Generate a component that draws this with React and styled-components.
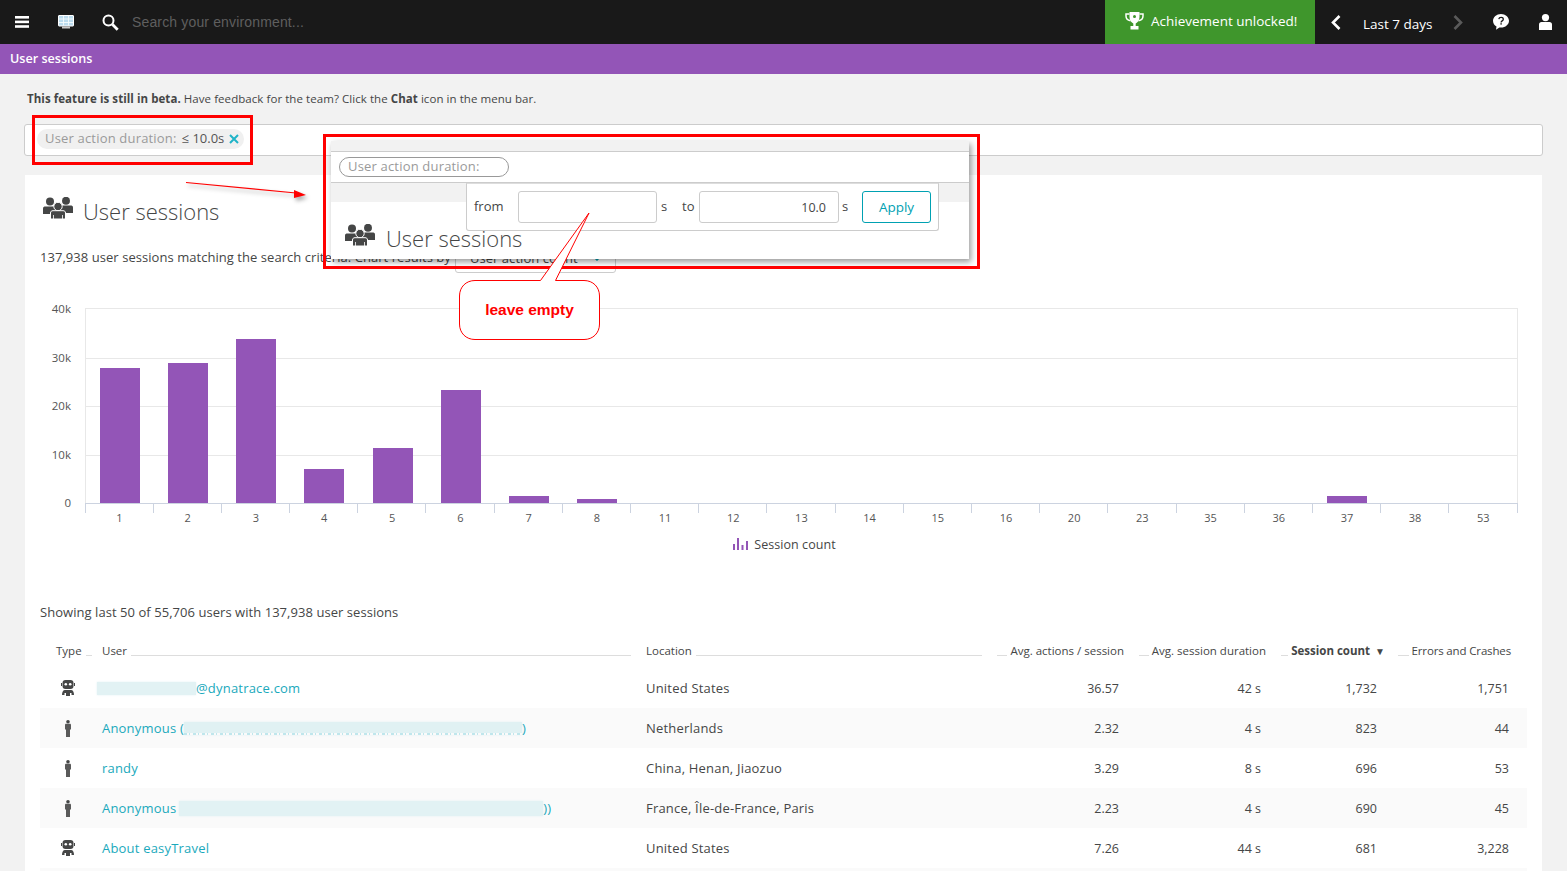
import React from "react";
import styled, { createGlobalStyle } from "styled-components";

const Global = createGlobalStyle`
  html, body { margin: 0; padding: 0; background: #f2f2f2; }
  body { font-family: "Open Sans", "Noto Sans", sans-serif; color: #454646; }
  * { box-sizing: border-box; }
`;

const Page = styled.div`
  position: relative;
  width: 1567px;
  height: 871px;
  overflow: hidden;
  background: #f2f2f2;
`;

/* ---------- top bars ---------- */
const TopBar = styled.header`
  display: flex;
  align-items: center;
  height: 44px;
  padding-right: 15px;
  background: #191919;
  color: #fff;
`;
const IconSlot = styled.span`
  display: flex;
  align-items: center;
  justify-content: center;
  flex: none;
  width: ${(p) => p.$w}px;
  margin-left: ${(p) => p.$ml || 0}px;
`;
const SearchText = styled.span`
  flex: 1;
  margin-left: 13px;
  font: 14px "Liberation Sans", Arial, sans-serif;
  color: #5f5f5f;
  letter-spacing: 0.15px;
`;
const Achievement = styled.div`
  display: flex;
  align-items: center;
  flex: none;
  gap: 7px;
  width: 210px;
  height: 44px;
  padding: 0 0 2px 20px;
  background: #3f962c;
  font-size: 13.5px;
  white-space: nowrap;
`;
const Timeframe = styled.span`
  flex: none;
  margin: 4px 0 0 22px;
  width: 70px;
  font-size: 13.5px;
  white-space: nowrap;
`;
const TitleBar = styled.div`
  display: flex;
  align-items: center;
  height: 30px;
  padding: 0 0 2px 10px;
  background: #9355b7;
  color: #fff;
  font-size: 12.6px;
  font-weight: 600;
`;

/* ---------- beta notice and filter ---------- */
const Notice = styled.p`
  margin: 0;
  padding: 17px 0 0 27px;
  height: 50px;
  font-size: 11.5px;
  letter-spacing: 0.06px;
  line-height: 16px;
  color: #454646;
`;
const FilterBar = styled.div`
  display: flex;
  align-items: center;
  height: 32px;
  margin: 0 24px;
  padding: 0 0 2px 12px;
  background: #fff;
  border: 1px solid #ccc;
  border-radius: 3px;
`;
const FilterPill = styled.span`
  display: inline-flex;
  align-items: center;
  width: 207px;
  height: 20px;
  padding: 0 5px 3px 8px;
  border-radius: 10px;
  background: #f0f0f0;
  font-size: 13px;
  letter-spacing: 0.18px;
  color: #9a9a9a;
  white-space: nowrap;
`;
const PillValue = styled.span`
  margin-left: 5px;
  color: #555;
  letter-spacing: 0;
`;
const PillClose = styled.span`
  display: flex;
  margin: 3px 0 0 5px;
`;

/* ---------- card ---------- */
const Card = styled.main`
  margin: 19px 25px 0;
  padding: 0 15px;
  background: #fff;
  height: 700px;
`;
const TitleRow = styled.div`
  display: flex;
  align-items: center;
  gap: 10px;
  height: 30px;
  margin-left: 3px;
  position: relative;
  top: 21px;
`;
const TitleIcon = styled.span`
  display: flex;
  margin-bottom: 6px;
`;
const PageTitle = styled.h1`
  margin: 0;
  font-size: 22px;
  font-weight: 300;
  color: #454646;
  white-space: nowrap;
`;
const ResultRow = styled.div`
  display: flex;
  align-items: center;
  height: 30px;
  margin-top: 38px;
  padding-bottom: 2px;
  font-size: 13px;
  letter-spacing: 0.05px;
  white-space: nowrap;
`;
const ChartSelect = styled.div`
  display: flex;
  align-items: center;
  justify-content: space-between;
  flex: none;
  width: 161px;
  height: 30px;
  margin: 2px 0 0 4px;
  padding: 0 14px;
  border: 1px solid #ccc;
  border-radius: 3px;
`;
const ChartSvg = styled.svg`
  display: block;
  margin-top: 22px;
`;
const Legend = styled.div`
  display: flex;
  align-items: center;
  justify-content: center;
  gap: 6px;
  width: 1487px;
  height: 20px;
  margin-top: 9px;
  padding-left: 2px;
  font-size: 12.5px;
  letter-spacing: 0.05px;
`;
const Summary = styled.div`
  height: 20px;
  margin-top: 48px;
  font-size: 13px;
  letter-spacing: 0.05px;
  line-height: 20px;
`;

/* ---------- table ---------- */
const columns = "46px 544px 351px 142px 142px 117px 113px";
const HeaderRow = styled.div`
  display: grid;
  grid-template-columns: ${columns};
  height: 20px;
  margin: 19px 0 7px;
  padding: 0 16px;
  font-size: 11.5px;
  line-height: 20px;
`;
const HeadCell = styled.div`
  display: flex;
  align-items: flex-start;
  padding-right: ${(p) => (p.$narrow ? 10 : p.$last ? 0 : 15)}px;
  white-space: nowrap;
  font-weight: ${(p) => (p.$sorted ? 700 : 400)};
  letter-spacing: ${(p) => (p.$last ? "-0.15px" : "0")};
`;
const HeadLine = styled.span`
  flex: 1;
  height: 15px;
  border-bottom: 1px solid #ddd;
  margin: ${(p) => (p.$before ? "0 3px 0 0" : "0 0 0 4px")};
`;
const SortMark = styled.span`
  margin: 0 -2px 0 5px;
  font-size: 10px;
`;
const Row = styled.div`
  display: grid;
  grid-template-columns: ${columns};
  align-items: center;
  height: 40px;
  padding: 0 16px;
  font-size: 13px;
  letter-spacing: 0.2px;
  background: ${(p) => (p.$alt ? "#fafafa" : "#fff")};
`;
const TypeCell = styled.div`
  display: flex;
  justify-content: center;
  width: 24px;
`;
const UserCell = styled.div`
  display: flex;
  align-items: center;
  color: #1aa9bc;
  white-space: nowrap;
`;
const Redacted = styled.span`
  display: inline-block;
  flex: none;
  width: ${(p) => p.$w}px;
  height: ${(p) => p.$h}px;
  margin-left: ${(p) => p.$ml || 0}px;
  background: ${(p) =>
    p.$trace
      ? `linear-gradient(#e0f1f3, #e0f1f3) top / 100% 11px no-repeat,
         repeating-linear-gradient(90deg, #bfe6ec 0 3px, #fafafa 3px 5px, #bfe6ec 5px 6px, #fafafa 6px 9px)`
      : "#e2f2f4"};
  box-shadow: 0 0 2px #e2f2f4;
`;
const NumCell = styled.div`
  text-align: right;
  padding-right: ${(p) => p.$pr}px;
  font-size: 12.5px;
  letter-spacing: 0;
`;

/* ---------- annotations laid over the page ---------- */
const RedBox = styled.div`
  position: absolute;
  border: 3px solid #f00;
  pointer-events: none;
`;
const FilterMark = styled(RedBox)`
  left: 32px;
  top: 115px;
  width: 221px;
  height: 50px;
`;
const PopupMark = styled(RedBox)`
  left: 323px;
  top: 134px;
  width: 657px;
  height: 135px;
`;
const Popup = styled.div`
  position: absolute;
  left: 331px;
  top: 141px;
  width: 638px;
  height: 118px;
  background: #fff;
  box-shadow: 2px 3px 6px rgba(0, 0, 0, 0.4);
`;
const PopupTop = styled.div`
  height: 11px;
  background: #f2f2f2;
  border-bottom: 1px solid #ccc;
`;
const PopupFilter = styled.div`
  display: flex;
  align-items: center;
  height: 31px;
  padding-left: 8px;
  border-bottom: 1px solid #ccc;
`;
const OutlinePill = styled.span`
  display: flex;
  align-items: center;
  width: 170px;
  height: 20px;
  padding: 0 0 2px 8px;
  border: 1px solid #999;
  border-radius: 10px;
  font-size: 13px;
  letter-spacing: 0.18px;
  color: #9a9a9a;
  white-space: nowrap;
`;
const PopupGap = styled.div`
  height: 19px;
  background: #f2f2f2;
`;
const PopupTitle = styled.div`
  display: flex;
  align-items: center;
  gap: 11px;
  height: 30px;
  margin: 21px 0 0 14px;
`;
const RangeBox = styled.div`
  position: absolute;
  left: 135px;
  top: 42px;
  display: flex;
  align-items: center;
  width: 473px;
  height: 48px;
  padding-left: 7px;
  background: #fff;
  border: 1px solid #ccc;
  border-top-color: #ddd;
  border-radius: 0 0 3px 3px;
  font-size: 13px;
`;
const RangeLabel = styled.span`
  flex: none;
  width: ${(p) => p.$w}px;
  padding: 0 0 2px ${(p) => p.$pl || 0}px;
`;
const RangeInput = styled.div`
  flex: none;
  width: ${(p) => p.$w}px;
  height: 32px;
  padding-right: 12px;
  border: 1px solid #ccc;
  border-radius: 3px;
  text-align: right;
  line-height: 32px;
  font-size: 12.5px;
`;
const ApplyButton = styled.button`
  flex: none;
  width: 69px;
  height: 32px;
  padding: 0;
  background: #fff;
  border: 1px solid #00a1b2;
  border-radius: 3px;
  color: #00a1b2;
  font: inherit;
  font-size: 13.5px;
`;
const Overlay = styled.svg`
  position: absolute;
  left: 0;
  top: 0;
  pointer-events: none;
`;
const ArrowOverlay = styled(Overlay)`
  filter: drop-shadow(2px 3px 2px rgba(0, 0, 0, 0.35));
`;
const CalloutText = styled.span`
  position: absolute;
  left: 459px;
  top: 299px;
  width: 141px;
  text-align: center;
  font: 700 15.5px/22px "Liberation Sans", Arial, sans-serif;
  color: #f00;
`;

/* ---------- drawings ---------- */
const MenuIcon = () => (
  <svg width="14" height="12" viewBox="0 0 14 12" fill="#fff">
    <rect y="0" width="14" height="2.6" />
    <rect y="4.6" width="14" height="2.6" />
    <rect y="9.2" width="14" height="2.6" />
  </svg>
);
const MonitorIcon = () => (
  <svg width="16" height="14" viewBox="0 0 16 14">
    <rect x="0.5" y="0.5" width="15" height="10.500" rx="0.5" fill="#bcdcee" stroke="#fff" />
    <path d="M1 4h14M1 7.500h14M5.500 1v9.500M10.500 1v9.500" stroke="#f4fafd" strokeWidth="0.9" />
    <rect x="4" y="11.500" width="8" height="2" fill="#c8c8c8" />
  </svg>
);
const SearchIcon = () => (
  <svg width="17" height="17" viewBox="0 0 17 17" fill="none" stroke="#fff">
    <circle cx="6.5" cy="6.5" r="5" strokeWidth="2" />
    <path d="M10.5 10.5l5.2 5.2" strokeWidth="2.8" />
  </svg>
);
const TrophyIcon = () => (
  <svg width="19" height="18" viewBox="0 0 19 18" fill="#fff">
    <path d="M4.500 0h10v5c0 3.400-2 5.600-3.800 6.400V14h2.800v3.500h-8V14h2.800v-2.600C6.500 10.600 4.500 8.400 4.500 5z" />
    <path d="M4.500 2H1v2c0 2.500 2 4.300 4.500 4.800M14.500 2H18v2c0 2.500-2 4.300-4.500 4.800" fill="none" stroke="#fff" strokeWidth="1.5" />
    <circle cx="9.500" cy="4.500" r="1.500" fill="#3f962c" />
  </svg>
);
const Chevron = ({ left, color }) => (
  <svg width="10" height="15" viewBox="0 0 10 15" fill="none" stroke={color} strokeWidth="2.6">
    <path d={left ? "M8.500 1L2 7.500l6.500 6.500" : "M1.500 1L8 7.500 1.500 14"} />
  </svg>
);
const ChatIcon = () => (
  <svg width="16" height="16" viewBox="0 0 16 16">
    <path d="M8 0c4.400 0 8 3 8 6.800s-3.600 6.800-8 6.800c-.6 0-1.100 0-1.600-.1L3 15.800l.5-3.200C1.400 11.400 0 9.300 0 6.800 0 3 3.600 0 8 0z" fill="#fff" />
    <path d="M5.800 5.200c.2-1.200 1.100-1.800 2.300-1.800 1.300 0 2.200.7 2.200 1.800 0 1.700-2.200 1.600-2.200 3.200" fill="none" stroke="#191919" strokeWidth="1.300" />
    <rect x="7.400" y="9.200" width="1.400" height="1.400" fill="#191919" />
  </svg>
);
const UserIcon = () => (
  <svg width="13" height="16" viewBox="0 0 13 16" fill="#fff">
    <circle cx="6.500" cy="3.600" r="3.600" />
    <path d="M0 10.500c0-1.500 1-2.500 2.500-2.500h8c1.500 0 2.500 1 2.500 2.500V16H0z" />
  </svg>
);
const UsersIcon = () => (
  <svg width="30" height="22" viewBox="0 0 30 22" fill="#454646">
    <circle cx="7" cy="4.500" r="4" />
    <circle cx="23" cy="3.800" r="4" />
    <path d="M0 17v-5.500C0 10 1 9.500 2.500 9.500h9c1.500 0 2 1 2 2V17z" />
    <path d="M30 16V10.500C30 9 29 8.500 27.500 8.500h-9c-1.500 0-2 1-2 2V16z" />
    <circle cx="15" cy="9.500" r="4.200" stroke="#fff" strokeWidth="1" />
    <path d="M7.500 22v-6c0-1.600 1-2.300 2.500-2.300h10c1.500 0 2.500.7 2.500 2.300v6z" stroke="#fff" strokeWidth="1" />
    <path d="M10.500 22v-4M19.500 22v-4" stroke="#fff" strokeWidth="0.8" />
  </svg>
);
const RobotIcon = () => (
  <svg width="14" height="16" viewBox="0 0 14 16">
    <rect x="1.500" y="0" width="11" height="9" rx="3" fill="#454646" />
    <circle cx="4.800" cy="4.300" r="1.300" fill="#fff" />
    <circle cx="9.200" cy="4.300" r="1.300" fill="#fff" />
    <rect x="0" y="3" width="1" height="3" fill="#454646" />
    <rect x="13" y="3" width="1" height="3" fill="#454646" />
    <path d="M1 15c0-3 1-5 3-5h6c2 0 3 2 3 5h-2.500v-2h-7v2z" fill="#454646" />
    <rect x="5" y="13" width="4" height="3" fill="#454646" />
  </svg>
);
const PersonIcon = () => (
  <svg width="6" height="17" viewBox="0 0 6 17">
    <circle cx="3" cy="1.800" r="1.800" fill="#454646" />
    <path d="M0 5c0-.8.500-1.200 1.200-1.200h3.600C5.500 3.800 6 4.200 6 5v4.500H5V17H1V9.500H0z" fill="#5a5a5a" />
  </svg>
);
const CloseIcon = () => (
  <svg width="10" height="10" viewBox="0 0 10 10" fill="none" stroke="#1fb4c8" strokeWidth="2">
    <path d="M1 1l8 8M9 1l-8 8" />
  </svg>
);
const BarsIcon = () => (
  <svg width="15" height="12" viewBox="0 0 15 12" fill="#9355b7">
    <rect x="0" y="6" width="2" height="6" />
    <rect x="4" y="0" width="2" height="12" />
    <rect x="8.500" y="7" width="2" height="5" />
    <rect x="13" y="3" width="2" height="9" />
  </svg>
);
const SelectChevron = () => (
  <svg width="8" height="5" viewBox="0 0 8 5" fill="none" stroke="#00a1b2" strokeWidth="1.500">
    <path d="M1 1l3 3 3-3" />
  </svg>
);

/* ---------- data ---------- */
const yTicks = [
  { label: "40k", y: 14 },
  { label: "30k", y: 63 },
  { label: "20k", y: 111 },
  { label: "10k", y: 160 },
  { label: "0", y: 208 },
];
const categories = [1, 2, 3, 4, 5, 6, 7, 8, 11, 12, 13, 14, 15, 16, 20, 23, 35, 36, 37, 38, 53];
const bars = [
  [100, 368], [168, 363], [236, 339], [304, 469], [373, 448], [441, 390], [509, 496], [577, 499], [1327, 496],
];
const step = 1432 / 21;

const SessionChart = () => (
  <ChartSvg width="1487" height="230" viewBox="40 295 1487 230">
    {[308, 358, 406, 455].map((y) => (
      <line key={y} x1="85" x2="1518" y1={y + 0.5} y2={y + 0.5} stroke="#e8e8e8" />
    ))}
    <line x1="85.500" x2="85.500" y1="308" y2="503" stroke="#e8e8e8" />
    <line x1="1517.500" x2="1517.500" y1="308" y2="503" stroke="#e8e8e8" />
    {bars.map(([x, top]) => (
      <rect key={x} x={x} y={top} width="40" height={503 - top} fill="#9355b7" />
    ))}
    <line x1="85" x2="1518" y1="503.500" y2="503.500" stroke="#ccd3e0" />
    {Array.from({ length: 22 }, (_, i) => {
      const x = Math.floor(85 + step * i) + 0.5;
      return <line key={i} x1={x} x2={x} y1="503" y2="513" stroke="#ccd3e0" />;
    })}
    {yTicks.map((t) => (
      <text key={t.label} x="71" y={295 + t.y + 4} textAnchor="end" fontSize="11.5" fill="#555">
        {t.label}
      </text>
    ))}
    {categories.map((c, i) => (
      <text key={c} x={85 + step * i + 34.5} y="522" textAnchor="middle" fontSize="11" fill="#555">
        {c}
      </text>
    ))}
  </ChartSvg>
);

const rows = [
  { icon: "robot", location: "United States", a: "36.57", d: "42 s", s: "1,732", e: "1,751",
    user: (<><Redacted $w={99} $h={13} $ml={-5} /><span>@dynatrace.com</span></>) },
  { icon: "person", location: "Netherlands", a: "2.32", d: "4 s", s: "823", e: "44",
    user: (<><span>Anonymous (</span><Redacted $w={338} $h={13} $trace /><span>)</span></>) },
  { icon: "person", location: "China, Henan, Jiaozuo", a: "3.29", d: "8 s", s: "696", e: "53", user: <span>randy</span> },
  { icon: "person", location: "France, Île-de-France, Paris", a: "2.23", d: "4 s", s: "690", e: "45",
    user: (<><span>Anonymous</span><Redacted $w={364} $h={15} $ml={3} /><span>))</span></>) },
  { icon: "robot", location: "United States", a: "7.26", d: "44 s", s: "681", e: "3,228", user: <span>About easyTravel</span> },
];

export default function App() {
  return (
    <Page>
      <Global />
      <TopBar>
        <IconSlot $w={14} $ml={15}><MenuIcon /></IconSlot>
        <IconSlot $w={16} $ml={29}><MonitorIcon /></IconSlot>
        <IconSlot $w={17} $ml={28}><SearchIcon /></IconSlot>
        <SearchText>Search your environment...</SearchText>
        <Achievement>
          <TrophyIcon />
          <span>Achievement unlocked!</span>
        </Achievement>
        <IconSlot $w={10} $ml={16}><Chevron left color="#fff" /></IconSlot>
        <Timeframe>Last 7 days</Timeframe>
        <IconSlot $w={10} $ml={20}><Chevron color="#5a5a5a" /></IconSlot>
        <IconSlot $w={16} $ml={30}><ChatIcon /></IconSlot>
        <IconSlot $w={13} $ml={30}><UserIcon /></IconSlot>
      </TopBar>
      <TitleBar>User sessions</TitleBar>
      <Notice>
        <b>This feature is still in beta.</b> Have feedback for the team? Click the <b>Chat</b> icon in the menu bar.
      </Notice>
      <FilterBar>
        <FilterPill>
          User action duration:
          <PillValue>≤ 10.0s</PillValue>
          <PillClose><CloseIcon /></PillClose>
        </FilterPill>
      </FilterBar>
      <Card>
        <TitleRow>
          <TitleIcon><UsersIcon /></TitleIcon>
          <PageTitle>User sessions</PageTitle>
        </TitleRow>
        <ResultRow>
          137,938 user sessions matching the search criteria. Chart results by
          <ChartSelect>
            <span>User action count</span>
            <SelectChevron />
          </ChartSelect>
        </ResultRow>
        <SessionChart />
        <Legend>
          <BarsIcon />
          <span>Session count</span>
        </Legend>
        <Summary>Showing last 50 of 55,706 users with 137,938 user sessions</Summary>
        <HeaderRow>
          <HeadCell $narrow>Type<HeadLine /></HeadCell>
          <HeadCell>User<HeadLine /></HeadCell>
          <HeadCell>Location<HeadLine /></HeadCell>
          <HeadCell><HeadLine $before />Avg. actions / session</HeadCell>
          <HeadCell><HeadLine $before />Avg. session duration</HeadCell>
          <HeadCell $sorted><HeadLine $before />Session count<SortMark>▼</SortMark></HeadCell>
          <HeadCell $last><HeadLine $before />Errors and Crashes</HeadCell>
        </HeaderRow>
        {rows.map((r, i) => (
          <Row key={i} $alt={i % 2 === 1}>
            <TypeCell>{r.icon === "robot" ? <RobotIcon /> : <PersonIcon />}</TypeCell>
            <UserCell>{r.user}</UserCell>
            <div>{r.location}</div>
            <NumCell $pr={20}>{r.a}</NumCell>
            <NumCell $pr={20}>{r.d}</NumCell>
            <NumCell $pr={21}>{r.s}</NumCell>
            <NumCell $pr={2}>{r.e}</NumCell>
          </Row>
        ))}
        <Row $alt />
      </Card>

      <FilterMark />
      <ArrowOverlay width="1567" height="871" viewBox="0 0 1567 871" fill="none">
        <path d="M186 182.500L296 193" stroke="#f00" strokeWidth="1.200" />
        <path d="M294 190l12 5-12 3z" fill="#f00" />
      </ArrowOverlay>
      <Popup>
        <PopupTop />
        <PopupFilter>
          <OutlinePill>User action duration:</OutlinePill>
        </PopupFilter>
        <PopupGap />
        <PopupTitle>
          <TitleIcon><UsersIcon /></TitleIcon>
          <PageTitle>User sessions</PageTitle>
        </PopupTitle>
        <RangeBox>
          <RangeLabel $w={44}>from</RangeLabel>
          <RangeInput $w={139} />
          <RangeLabel $w={25} $pl={4}>s</RangeLabel>
          <RangeLabel $w={17}>to</RangeLabel>
          <RangeInput $w={140}>10.0</RangeInput>
          <RangeLabel $w={23} $pl={3}>s</RangeLabel>
          <ApplyButton>Apply</ApplyButton>
        </RangeBox>
      </Popup>
      <PopupMark />
      <Overlay width="1567" height="871" viewBox="0 0 1567 871">
        <path
          d="M475 280.500H540.500L589 213L555.500 280.500H584C593 280.500 599.500 287 599.500 296V324C599.500 333 593 339.500 584 339.500H475C466 339.500 459.500 333 459.500 324V296C459.500 287 466 280.500 475 280.500Z"
          fill="#fff"
          stroke="#f00"
          strokeWidth="1"
        />
      </Overlay>
      <CalloutText>leave empty</CalloutText>
    </Page>
  );
}
